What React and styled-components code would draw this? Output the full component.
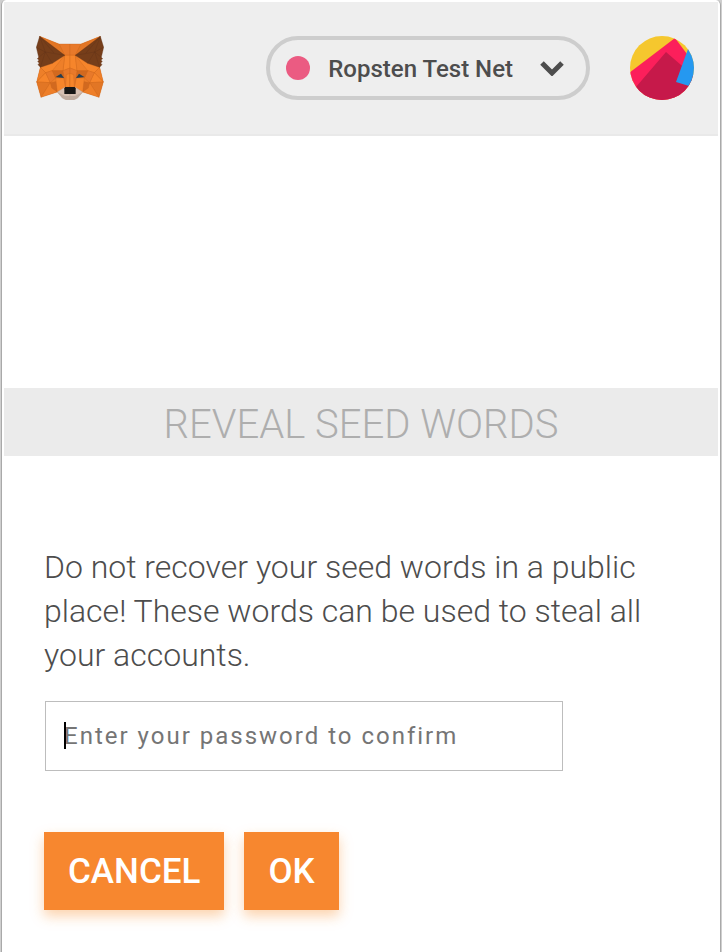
import React from "react";
import styled, { createGlobalStyle } from "styled-components";

const GlobalStyle = createGlobalStyle`
  *, *::before, *::after { box-sizing: border-box; }
  html { height: 100%; }
  body {
    margin: 0;
    min-height: 100%;
    display: flex;
    background: #cfcfcf;
    color: #4d4d4d;
    font-family: Roboto, "Liberation Sans", sans-serif;
  }
  #root { flex: 1; display: flex; }
`;

const Popup = styled.div`
  flex: 1;
  margin: 0 1px;
  padding: 2px;
  background: #fff;
  border: solid #a9a9a9;
  border-width: 0 1px;
  border-radius: 5px 5px 0 0;
`;

const Header = styled.header`
  display: flex;
  align-items: center;
  height: 134px;
  padding: 0 24px 0 32px;
  background: #eee;
  border-bottom: 2px solid #e9e9e9;
`;

const NetworkButton = styled.button`
  display: flex;
  align-items: center;
  height: 64px;
  margin: 0 40px 0 auto;
  padding: 0 22px 0 16px;
  border: 4px solid #cdcdcd;
  border-radius: 32px;
  background: transparent;
  color: #4d4d4d;
  font: 500 24px/28px Roboto, "Liberation Sans", sans-serif;
`;

const NetworkDot = styled.span`
  width: 24px;
  height: 24px;
  margin-right: 18px;
  border-radius: 50%;
  background: #eb5b82;
`;

const NetworkName = styled.span`
  padding-top: 2px;
`;

const Chevron = styled.svg`
  margin-left: 27px;
`;

const AvatarButton = styled.button`
  display: flex;
  padding: 0;
  border: 0;
  border-radius: 50%;
  background: transparent;
`;

const Title = styled.h1`
  margin: 252px 0 0;
  padding: 9px 0 3px;
  background: #ebebeb;
  color: #aeaeae;
  font-size: 40px;
  font-weight: 300;
  line-height: 56px;
  text-align: center;
`;

const Form = styled.form`
  padding: 89px 40px 40px;
`;

const Warning = styled.p`
  margin: 0;
  font-size: 32px;
  font-weight: 300;
  line-height: 44px;
`;

const PasswordField = styled.div`
  position: relative;
  max-width: 518px;
  margin: 24px 1px 61px;

  &:has(input:placeholder-shown)::after {
    content: "";
    position: absolute;
    top: 21px;
    left: 19px;
    width: 2px;
    height: 27px;
    background: #000;
  }
`;

const PasswordInput = styled.input`
  display: block;
  width: 100%;
  height: 70px;
  padding: 0 18px;
  border: 1px solid #bdbdbd;
  background: #fff;
  color: #4d4d4d;
  font: 400 24px/28px Roboto, "Liberation Sans", sans-serif;
  letter-spacing: 2px;
  outline: none;
  &::placeholder { color: #757575; opacity: 1; }
  &:placeholder-shown { caret-color: transparent; }
`;

const Actions = styled.div`
  display: flex;
  gap: 20px;
`;

const ActionButton = styled.button`
  height: 78px;
  padding: 2px 24px 0;
  border: 0;
  background: #f7872f;
  box-shadow: 0 6px 12px rgba(247, 134, 28, 0.36);
  color: #fff;
  font: 500 35px/42px Roboto, "Liberation Sans", sans-serif;
`;

const FoxHalf = () => (
  <g stroke="#c9651c" strokeWidth="1" strokeLinejoin="round">
    <path fill="#ee7f29" stroke="none" d="M40 25L98 48H131V200H100L93 192 44 208 31 162 42 118z" />
    <path fill="#e8792a" d="M98 48H131V82L115 82z" />
    <path fill="#e27625" d="M40 25L98 48 115 82z" />
    <path fill="#f6852b" d="M115 82L131 82V120L110 128z" />
    <path fill="#ee7f29" d="M115 82L80 100 78 128 110 128z" />
    <path fill="#f6852b" d="M115 82L42 118 58 134 78 128z" />
    <path fill="#ee7f29" d="M42 118L31 162 58 134z" />
    <path fill="#f6852b" d="M58 134L31 162 72 164z" />
    <path fill="#e8792a" d="M58 134L78 128 88 150 72 164z" />
    <path fill="#e27625" d="M31 162L44 208 72 164z" />
    <path fill="#ee7f29" d="M72 164L44 208 93 192z" />
    <path fill="#d2691f" d="M72 164L93 160 93 192 76 180z" />
    <path fill="#d2691f" d="M78 128L110 128 118 152 88 150z" />
    <path fill="#f6852b" d="M88 150L112 150 118 178 93 192z" />
    <path fill="#e8792a" d="M110 128L131 120V178H118z" />
    <path fill="#f6852b" d="M120 140L131 136V178H118z" />
    <path fill="#d6c0b3" stroke="#b6a397" d="M93 192L115 178 117 197H131V216H120L108 210z" />
    <path fill="#bfaca0" stroke="none" d="M93 192L116 204 131 204V216H120L108 210z" />
    <path fill="#243f52" stroke="none" d="M88 147L104 137 113 150z" />
    <path fill="#763e1a" stroke="#5f3218" d="M40 25L30 58 37 88 33 92 38 96 34 101 39 105 35 110 42 118 78 106 115 82z" />
    <path fill="none" stroke="#5f3218" d="M40 25L57 72 37 88M30 58L57 72 115 82M57 72L78 106M57 72L42 118M40 25L83 75" />
  </g>
);

const FoxLogo = () => (
  <svg width="68" height="64" viewBox="29 24 204 192" role="img" aria-label="MetaMask">
    <FoxHalf />
    <g transform="translate(262 0) scale(-1 1)"><FoxHalf /></g>
    <path fill="#161616" d="M117 177H145L148 181V198H114V181z" />
  </svg>
);

const Avatar = () => (
  <svg width="64" height="64" viewBox="0 0 64 64" aria-hidden="true">
    <clipPath id="avatar-circle"><circle cx="32" cy="32" r="32" /></clipPath>
    <g clipPath="url(#avatar-circle)">
      <path fill="#f5c72e" d="M0 0h64v64H0z" />
      <path fill="#fc1f5b" d="M-1 37L45 2 60 22V64H0z" />
      <path fill="#c6194a" d="M36 16L66 42V66H-4L6 51z" />
      <path fill="#2598f0" d="M58 13L46 46 66 52V13z" />
    </g>
  </svg>
);

export default function App() {
  return (
    <>
      <GlobalStyle />
      <Popup>
        <Header>
          <FoxLogo />
          <NetworkButton type="button">
            <NetworkDot />
            <NetworkName>Ropsten Test Net</NetworkName>
            <Chevron width="24" height="16" viewBox="0 0 24 16" aria-hidden="true">
              <path d="M2 3L12 13 22 3" fill="none" stroke="#4d4d4d" strokeWidth="5" />
            </Chevron>
          </NetworkButton>
          <AvatarButton type="button" aria-label="Accounts"><Avatar /></AvatarButton>
        </Header>
        <main>
          <Title>REVEAL SEED WORDS</Title>
          <Form onSubmit={(event) => event.preventDefault()}>
            <Warning>
              Do not recover your seed words in a public place! These words can be used to steal all your accounts.
            </Warning>
            <PasswordField>
              <PasswordInput type="password" aria-label="Password" placeholder="Enter your password to confirm" autoFocus />
            </PasswordField>
            <Actions>
              <ActionButton type="button">CANCEL</ActionButton>
              <ActionButton type="submit">OK</ActionButton>
            </Actions>
          </Form>
        </main>
      </Popup>
    </>
  );
}
